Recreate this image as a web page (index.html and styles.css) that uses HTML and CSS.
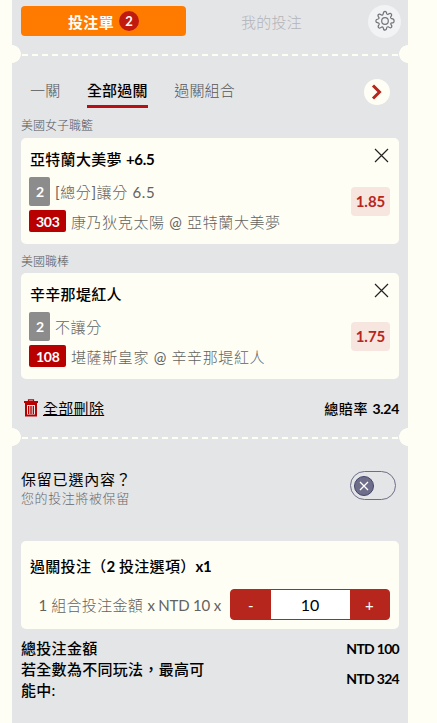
FILE: index.html
```
<!DOCTYPE html>
<html lang="zh-Hant">
<head>
    <meta charset="UTF-8">
    <meta name="viewport" content="width=device-width, initial-scale=1.0">
    <title>投注單</title>
    <link rel="stylesheet" href="styles.css">
</head>
<body>
    <main class="betslip">
        <header class="top-bar">
            <button class="slip-btn">投注單 <span class="count">2</span></button>
            <button class="my-bets">我的投注</button>
            <button class="settings" aria-label="設定">
                <svg width="22" height="22" viewBox="0 0 22 22" fill="none" stroke="#74757a" stroke-width="1.2" stroke-linejoin="round">
                    <path d="M9.300 3.600Q9.500 1.300 11 1.300t1.700 2.300q.2.900 1 .9l.5-.2q1.900-1.600 3-.5t-.5 3q-.4.800.2 1.400l.8.500q2.400.2 2.400 2.300t-2.400 1.900q-.9.200-1 1l.2.500q1.600 1.900.5 3t-3-.5q-.8-.4-1.400.2l-.3.800q-.2 2.300-1.700 2.300t-1.700-2.300q-.2-.9-1-1l-.7.200q-1.900 1.600-3 .5t.5-3q.4-.8-.2-1.400l-.8-.3Q1.800 12.400 1.800 10.900t2.300-1.900q.9-.2 1-1l-.2-.5q-1.600-1.900-.5-3t3 .5q.8.400 1.400-.2z"/>
                    <circle cx="11" cy="11" r="3.300"/>
                </svg>
            </button>
        </header>

        <div class="tear"></div>

        <nav class="tabs">
            <a class="tab">一關</a>
            <a class="tab active">全部過關</a>
            <a class="tab">過關組合</a>
            <button class="next" aria-label="下一個">
                <svg width="12" height="16" viewBox="0 0 12 16" fill="none" stroke="#b7261c" stroke-width="3">
                    <path d="M2 1.500l6.500 6.500L2 14.500"/>
                </svg>
            </button>
        </nav>

        <h4 class="league">美國女子職籃</h4>
        <section class="bet">
            <div class="bet-info">
                <h3 class="pick">亞特蘭大美夢 <span class="num">+6.5</span></h3>
                <p class="line market"><span class="tag gray">2</span><span><span class="latin">[</span>總分<span class="latin">]</span>讓分 <span class="latin">6.5</span></span></p>
                <p class="line match"><span class="tag red">303</span><span>康乃狄克太陽 <span class="latin">@</span> 亞特蘭大美夢</span></p>
            </div>
            <div class="bet-side">
                <svg class="close" width="15" height="15" viewBox="0 0 15 15" stroke="#222" stroke-width="1.200"><path d="M1 1l13 13M14 1L1 14"/></svg>
                <span class="odds">1.85</span>
            </div>
        </section>

        <h4 class="league second">美國職棒</h4>
        <section class="bet">
            <div class="bet-info">
                <h3 class="pick">辛辛那堤紅人</h3>
                <p class="line market"><span class="tag gray">2</span><span>不讓分</span></p>
                <p class="line match"><span class="tag red">108</span><span>堪薩斯皇家 <span class="latin">@</span> 辛辛那堤紅人</span></p>
            </div>
            <div class="bet-side">
                <svg class="close" width="15" height="15" viewBox="0 0 15 15" stroke="#222" stroke-width="1.200"><path d="M1 1l13 13M14 1L1 14"/></svg>
                <span class="odds">1.75</span>
            </div>
        </section>

        <div class="slip-footer">
            <a class="delete-all">
                <svg width="14" height="18" viewBox="0 0 14 18" fill="none" stroke="#b80000">
                    <path stroke-width="1.200" d="M4.500 2V.8h5V2"/>
                    <path stroke-width="2" d="M0 3h14"/>
                    <path stroke-width="2" d="M2 5v11.500h10V5z"/>
                    <path stroke-width="1" d="M4.500 7v8M6.200 7v8M7.800 7v8M9.500 7v8"/>
                </svg>
                <span>全部刪除</span>
            </a>
            <span class="total-odds">總賠率 <span class="num">3.24</span></span>
        </div>

        <div class="tear"></div>

        <div class="keep">
            <div>
                <p class="keep-title">保留已選內容？</p>
                <p class="keep-note">您的投注將被保留</p>
            </div>
            <button class="toggle" aria-label="保留已選內容">
                <span class="knob">
                    <svg width="10" height="10" viewBox="0 0 10 10" stroke="#fff" stroke-width="1.300"><path d="M1 1l8 8M9 1L1 9"/></svg>
                </span>
            </button>
        </div>

        <section class="stake">
            <h3 class="stake-title">過關投注（<span class="num">2</span> 投注選項）<span class="num">x1</span></h3>
            <div class="stake-row">
                <span class="stake-label"><span class="latin">1</span> 組合投注金額 <span class="latin">x NTD 10 x</span></span>
                <div class="stepper">
                    <button>-</button>
                    <span class="amount">10</span>
                    <button>+</button>
                </div>
            </div>
        </section>

        <div class="sum-row">
            <span class="sum-label">總投注金額</span>
            <span class="sum-value">NTD 100</span>
        </div>
        <div class="sum-row">
            <span class="sum-label">若全數為不同玩法，最高可能中:</span>
            <span class="sum-value last">NTD 324</span>
        </div>
    </main>
</body>
</html>
```
FILE: styles.css
```
* {
    box-sizing: border-box;
}
body {
    margin: 0;
    background: #fffef5;
    font-family: Lato, "Noto Sans CJK TC", sans-serif;
    font-size: 15px;
    color: #000;
}
h3, h4, p {
    margin: 0;
    font-size: 15px;
    font-weight: 500;
}
button {
    border: none;
    padding: 0;
    background: none;
    font-family: inherit;
    font-size: inherit;
    color: inherit;
}
svg {
    display: block;
}
.betslip {
    width: 396px;
    height: 723px;
    margin-left: 12px;
    padding: 4px 9px 0;
    background: #e4e5e7;
    overflow: hidden;
}
.top-bar {
    display: flex;
    height: 34px;
    align-items: center;
}
.slip-btn {
    display: flex;
    width: 165px;
    height: 30px;
    align-items: center;
    justify-content: center;
    gap: 5px;
    border-radius: 4px;
    background: #ff7b00;
    color: #fffef5;
    font-weight: 700;
    letter-spacing: 0.3px;
}
.count {
    width: 20px;
    height: 20px;
    border-radius: 50%;
    background: #c11b10;
    font-size: 13px;
    line-height: 20px;
    letter-spacing: 0;
}
.my-bets {
    width: 171px;
    color: #b3b4b7;
    font-weight: 300;
    letter-spacing: 0.3px;
}
.settings {
    display: flex;
    width: 33px;
    height: 33px;
    margin-left: auto;
    margin-right: -2px;
    align-items: center;
    justify-content: center;
    border-radius: 50%;
    background: #f2f3f5;
}
.tear {
    height: 18px;
    margin: 7px -9px 0;
    background:
        radial-gradient(circle at 0 50%, #fffef5 8.5px, transparent 9.2px),
        radial-gradient(circle at 100% 50%, #fffef5 8.5px, transparent 9.2px),
        repeating-linear-gradient(90deg, #fffef5 0 6px, transparent 6px 10px) 10px 9px / 376px 2px no-repeat;
}
.tabs {
    display: flex;
    height: 55px;
    padding: 2px 9px 0;
    align-items: center;
}
.tab {
    height: 33px;
    margin-right: 26.5px;
    padding-top: 3px;
    line-height: 24px;
    color: #55565a;
    font-weight: 300;
    letter-spacing: 0.2px;
}
.tab.active {
    border-bottom: 3px solid #b80f14;
    color: #000;
    font-weight: 500;
}
.next {
    display: flex;
    width: 26px;
    height: 26px;
    margin-left: auto;
    align-items: center;
    justify-content: center;
    border-radius: 50%;
    background: #fffef5;
}
.league {
    height: 20px;
    font-size: 12px;
    line-height: 16px;
    color: #55565a;
    font-weight: 300;
}
.league.second {
    height: 29px;
    padding-top: 10px;
}
.bet {
    display: flex;
    height: 106px;
    justify-content: space-between;
    padding: 9px 9px 0 8px;
    border-radius: 5px;
    background: #fffef5;
}
.pick {
    height: 30px;
    padding-left: 1px;
    line-height: 24px;
    letter-spacing: 0.3px;
}
.num {
    font-weight: 700;
    letter-spacing: -0.3px;
}
.latin {
    font-weight: 400;
}
.line {
    display: flex;
    align-items: center;
    gap: 5px;
    color: #63635f;
    font-weight: 300;
    letter-spacing: 0.6px;
}
.market {
    height: 29px;
    margin-bottom: 4px;
}
.match {
    height: 22px;
}
.tag {
    display: flex;
    height: 100%;
    padding: 0 7px;
    align-items: center;
    border-radius: 2px;
    color: #fff;
    font-size: 14px;
    font-weight: 700;
    letter-spacing: -0.5px;
}
.gray {
    width: 21px;
    background: #8c8c8c;
}
.red {
    width: 37px;
    letter-spacing: -0.3px;
    background: #b80000;
}
.bet-side {
    display: flex;
    flex-direction: column;
    align-items: flex-end;
}
.close {
    margin: 1px 1px 24px 0;
}
.odds {
    width: 39px;
    height: 29px;
    border-radius: 4px;
    background: #f7e5df;
    color: #b7261c;
    font-weight: 700;
    line-height: 29px;
    text-align: center;
}
.slip-footer {
    display: flex;
    height: 42px;
    padding-top: 16px;
    align-items: center;
    justify-content: space-between;
}
.delete-all {
    display: flex;
    padding-left: 3px;
    align-items: center;
    gap: 5px;
    line-height: 20px;
    letter-spacing: 0.3px;
    text-decoration: underline;
}
.total-odds {
    font-size: 14px;
    font-weight: 500;
    letter-spacing: 0.7px;
}
.keep {
    display: flex;
    height: 95px;
    padding: 24px 3px 0 0;
    justify-content: space-between;
}
.keep-title {
    font-weight: 400;
    line-height: 18px;
    letter-spacing: 0.8px;
}
.keep-note {
    font-size: 13px;
    line-height: 20px;
    color: #66676a;
    font-weight: 300;
    letter-spacing: 0.6px;
}
.toggle {
    display: flex;
    width: 46px;
    height: 29px;
    margin-top: 1px;
    padding-left: 3px;
    align-items: center;
    border: 1px solid #6e6d8a;
    border-radius: 15px;
}
.knob {
    display: flex;
    width: 20px;
    height: 20px;
    align-items: center;
    justify-content: center;
    border: 1px solid #45446a;
    border-radius: 50%;
    background: #6e6d8a;
}
.stake {
    height: 88px;
    padding: 13px 9px 0;
    border-radius: 5px;
    background: #fffef5;
}
.stake-title {
    height: 35px;
    line-height: 24px;
    letter-spacing: 0.3px;
}
.stake-row {
    display: flex;
    align-items: center;
    justify-content: flex-end;
    gap: 9px;
}
.stake-label {
    color: #63635f;
    font-weight: 300;
    line-height: 20px;
    letter-spacing: 0.3px;
}
.stake-label .latin {
    letter-spacing: -0.2px;
}
.stepper {
    display: flex;
    width: 160px;
    height: 31px;
    border: 1px solid #b7261c;
    border-radius: 4px;
    background: #b7261c;
}
.stepper button {
    flex: 1;
    color: #fff;
}
.amount {
    width: 79px;
    background: #fff;
    font-size: 16px;
    line-height: 29px;
    text-align: center;
}
.sum-row {
    display: flex;
    align-items: center;
    justify-content: space-between;
    font-weight: 500;
    line-height: 21px;
}
.stake + .sum-row {
    margin-top: 9px;
}
.sum-label {
    width: 190px;
    letter-spacing: 0.3px;
}
.sum-value {
    font-size: 14px;
    font-weight: 700;
    letter-spacing: -0.7px;
}
.last {
    padding-bottom: 3px;
}
```
